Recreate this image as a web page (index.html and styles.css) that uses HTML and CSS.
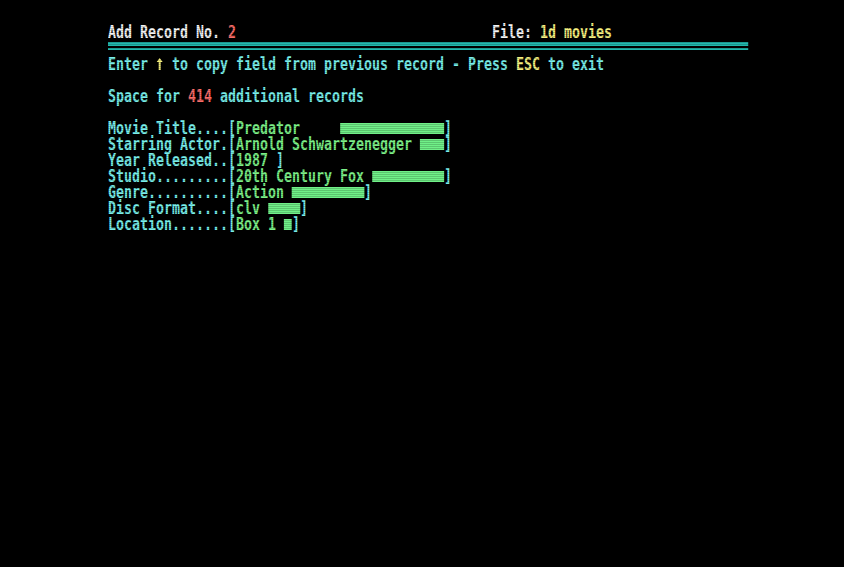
FILE: index.html
```html
<!DOCTYPE html>
<html lang="en">
<head>
    <meta charset="UTF-8">
    <title>Add Record</title>
    <link rel="stylesheet" href="styles.css">
</head>
<body>
    <div class="crt">
        <div class="screen">
            <div class="titlebar">
                <div class="row"><span class="white">Add Record No. </span><span class="red">2</span></div>
                <div class="row"><span class="white">File: </span><span class="yellow">1d movies</span></div>
            </div>
            <div class="rule"></div>
            <div class="row gap">Enter <svg class="arrow" viewBox="0 0 8 16" preserveAspectRatio="none"><path d="M4 2 L7 6 H5 V14 H3 V6 H1 Z" fill="#f4ee7c"/></svg> to copy field from previous record - Press <span class="yellow">ESC</span> to exit</div>
            <div class="row gap">Space for <span class="red">414</span> additional records</div>

            <div class="row">Movie Title....[<span class="value">Predator     </span><span class="bar w13"></span>]</div>
            <div class="row">Starring Actor.[<span class="value">Arnold Schwartzenegger </span><span class="bar w3"></span>]</div>
            <div class="row">Year Released..[<span class="value">1987 </span>]</div>
            <div class="row">Studio.........[<span class="value">20th Century Fox </span><span class="bar w9"></span>]</div>
            <div class="row">Genre..........[<span class="value">Action </span><span class="bar w9"></span>]</div>
            <div class="row">Disc Format....[<span class="value">clv </span><span class="bar w4"></span>]</div>
            <div class="row">Location.......[<span class="value">Box 1 </span><span class="bar w1"></span>]</div>
        </div>
    </div>
</body>
</html>
```

FILE: styles.css
```css
html, body { margin: 0; padding: 0; background: #000; }
body { width: 844px; height: 567px; overflow: hidden; }
.crt { position: relative; height: 567px; padding: 24px 0 0 108px; box-sizing: border-box; }
.crt::after { content: ""; position: absolute; inset: 0; background: repeating-linear-gradient(to bottom, rgba(0,0,0,0.18) 0 1px, transparent 1px 2px); pointer-events: none; }
.screen { width: 80ch; font-family: "DejaVu Sans Mono", monospace; font-size: 17px; line-height: 16px; font-weight: bold; color: #78eeea; transform: scaleX(0.7817); transform-origin: left top; }
.titlebar { display: grid; grid-template-columns: 48ch auto; }
.rule { margin-top: 2px; margin-bottom: 6px; height: 2px; border-top: 4px solid #22b8ae; border-bottom: 2px solid #22b8ae; }
.row { height: 16px; white-space: pre; }
.gap { margin-bottom: 16px; }
.white { color: #f4f4f4; }
.red { color: #f86c68; }
.yellow { color: #f6f080; }
.value { color: #7cf088; }
.arrow { display: inline-block; vertical-align: top; width: 1ch; height: 16px; }
.bar { display: inline-block; vertical-align: top; margin-top: 3px; height: 11px; background: #70f088; }
.w1 { width: 1ch; }
.w3 { width: 3ch; }
.w4 { width: 4ch; }
.w9 { width: 9ch; }
.w13 { width: 13ch; }
```
